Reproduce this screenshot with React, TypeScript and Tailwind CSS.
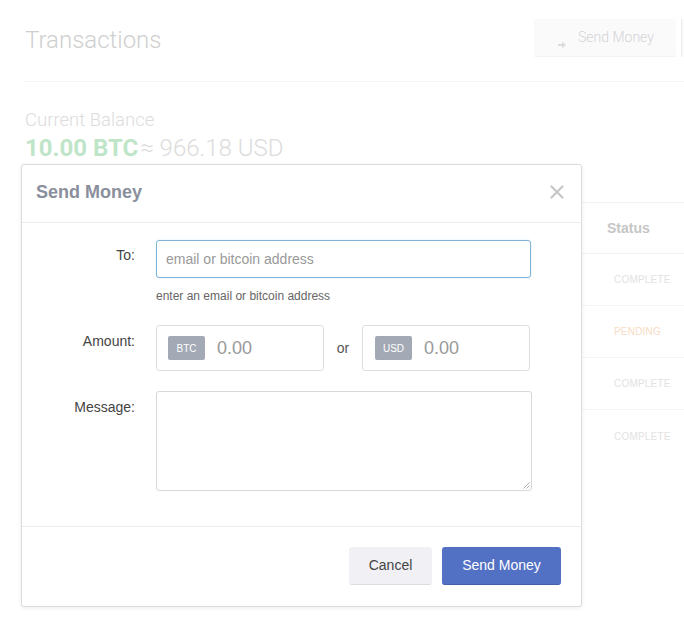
import React from "react";

const rows = [
  { status: "COMPLETE", color: "text-[#e2e2e2]" },
  { status: "PENDING", color: "text-[#f7dcc4]" },
  { status: "COMPLETE", color: "text-[#e2e2e2]" },
  { status: "COMPLETE", color: "text-[#e2e2e2]" },
];

export default function App() {
  return (
    <div className="relative w-[684px] h-[624px] overflow-hidden bg-white" style={{ fontFamily: '"Liberation Sans", Arial, sans-serif' }}>
      {/* Background page (faded) */}
      <div className="pl-[25px]">
        <div className="flex items-start justify-between pt-[19px] h-[81px]">
          <h1 className="mt-[7px] text-[24px] leading-[28px] text-[#cfcfcf]" style={{ fontFamily: 'Roboto, "Liberation Sans", sans-serif', fontWeight: 300 }}>
            Transactions
          </h1>
          <div className="flex items-start">
            <div className="w-[142px] h-[38px] bg-[#fafafb] border-b border-[#f2f2f4] rounded-[2px] flex items-center pl-[24px] gap-[12px]">
              <svg width="8" height="8" viewBox="0 0 8 8" className="mt-[15px]">
                <path d="M0 3h4V0.5L8 4 4 7.5V5H0z" fill="#dcdcdc" />
              </svg>
              <span className="text-[14px] text-[#d3d3d6]" style={{ fontFamily: 'Roboto, "Liberation Sans", sans-serif', fontWeight: 300 }}>Send Money</span>
            </div>
            <div className="ml-[5px] w-[3px] h-[38px] border-l border-[#ececee] bg-[#fafafb]" />
          </div>
        </div>
        <div className="h-px bg-[#f3f3f3]" />
        <div className="pt-[28px]" style={{ fontFamily: 'Roboto, "Liberation Sans", sans-serif' }}>
          <div className="text-[18.5px] leading-[21px] text-[#dcdcdc]" style={{ fontWeight: 300 }}>Current Balance</div>
          <div className="mt-[3px] text-[24px] leading-[28px] flex items-baseline">
            <span className="font-bold text-[#bfe5c9]">10.00 BTC</span>
            <span className="text-[#dcdcdc] ml-[2px]" style={{ fontWeight: 300 }}>≈ 966.18 USD</span>
          </div>
        </div>
        <div className="mt-[40px]">
          <div className="h-[52px] border-t border-b border-[#f2f2f2] flex items-center justify-end">
            <span className="w-[77px] text-[14px] font-bold text-[#c6c6c6]">Status</span>
          </div>
          {rows.map((r, i) => (
            <div key={i} className={`h-[52px] flex items-center justify-end ${i < rows.length - 1 ? "border-b border-[#f4f4f4]" : ""}`}>
              <span className={`w-[77px] pl-[7px] text-[10px] tracking-[0.2px] ${r.color}`}>{r.status}</span>
            </div>
          ))}
        </div>
      </div>

      {/* Modal */}
      <div className="absolute left-[21px] top-[164px] w-[561px] h-[443px] bg-white border border-[#dcdcdf] rounded-[3px] shadow-[0_1px_4px_rgba(0,0,0,0.08)] flex flex-col">
        <div className="h-[58px] border-b border-[#ececef] flex items-center justify-between pl-[14px] pr-[17px]">
          <h2 className="text-[18px] font-bold text-[#8a8f9c] mt-[-2px]">Send Money</h2>
          <svg width="14" height="14" viewBox="0 0 14 14" className="mt-[-4px]">
            <path d="M1.5 1.5L12.5 12.5M12.5 1.5L1.5 12.5" stroke="#c6c6c8" strokeWidth="2.2" strokeLinecap="round" />
          </svg>
        </div>
        <div className="flex-1 pt-[17px]">
          <div className="flex">
            <label className="w-[113px] text-right text-[14px] text-[#444] pt-[5px]">To:</label>
            <div className="ml-[21px]">
              <div className="w-[375px] h-[38px] border border-[#7fb4d7] rounded-[3px] flex items-center px-[9px] shadow-[0_0_2px_rgba(102,175,233,0.3)]">
                <span className="text-[14px] text-[#999] mt-[1px]">email or bitcoin address</span>
              </div>
              <div className="mt-[11px] text-[12px] leading-[14px] text-[#666]">enter an email or bitcoin address</div>
            </div>
          </div>
          <div className="flex mt-[22px]">
            <label className="w-[113px] text-right text-[14px] text-[#444] pt-[6px]">Amount:</label>
            <div className="ml-[21px] flex items-center">
              <div className="w-[168px] h-[46px] border border-[#dedee0] rounded-[3px] flex items-center pl-[11px] gap-[12px]">
                <span className="w-[37px] h-[24px] rounded-[2px] bg-[#a4a9b6] text-white text-[10px] flex items-center justify-center">BTC</span>
                <span className="text-[18px] text-[#999]">0.00</span>
              </div>
              <span className="w-[38px] text-center text-[14px] text-[#555]">or</span>
              <div className="w-[168px] h-[46px] border border-[#dedee0] rounded-[3px] flex items-center pl-[12px] gap-[12px]">
                <span className="w-[37px] h-[24px] rounded-[2px] bg-[#a4a9b6] text-white text-[10px] flex items-center justify-center">USD</span>
                <span className="text-[18px] text-[#999]">0.00</span>
              </div>
            </div>
          </div>
          <div className="flex mt-[20px]">
            <label className="w-[113px] text-right text-[14px] text-[#444] pt-[6px]">Message:</label>
            <div className="ml-[21px] relative w-[376px] h-[100px] border border-[#d8d8da] rounded-[3px]">
              <svg width="8" height="8" viewBox="0 0 8 8" className="absolute right-[1px] bottom-[1px]">
                <path d="M7.5 1.5L1.5 7.5M7.5 4.5L4.5 7.5" stroke="#9a9a9a" strokeWidth="0.8" />
              </svg>
            </div>
          </div>
        </div>
        <div className="h-[80px] border-t border-[#ececef] flex items-start justify-end pt-[20px] pr-[20px] gap-[10px]">
          <button className="w-[83px] h-[38px] rounded-[3px] bg-[#f0f0f5] border-b border-[#dcdce3] text-[14px] text-[#444]">Cancel</button>
          <button className="w-[119px] h-[38px] rounded-[3px] bg-[#5371c4] border-b border-[#4560ab] text-[14px] text-white">Send Money</button>
        </div>
      </div>
    </div>
  );
}
